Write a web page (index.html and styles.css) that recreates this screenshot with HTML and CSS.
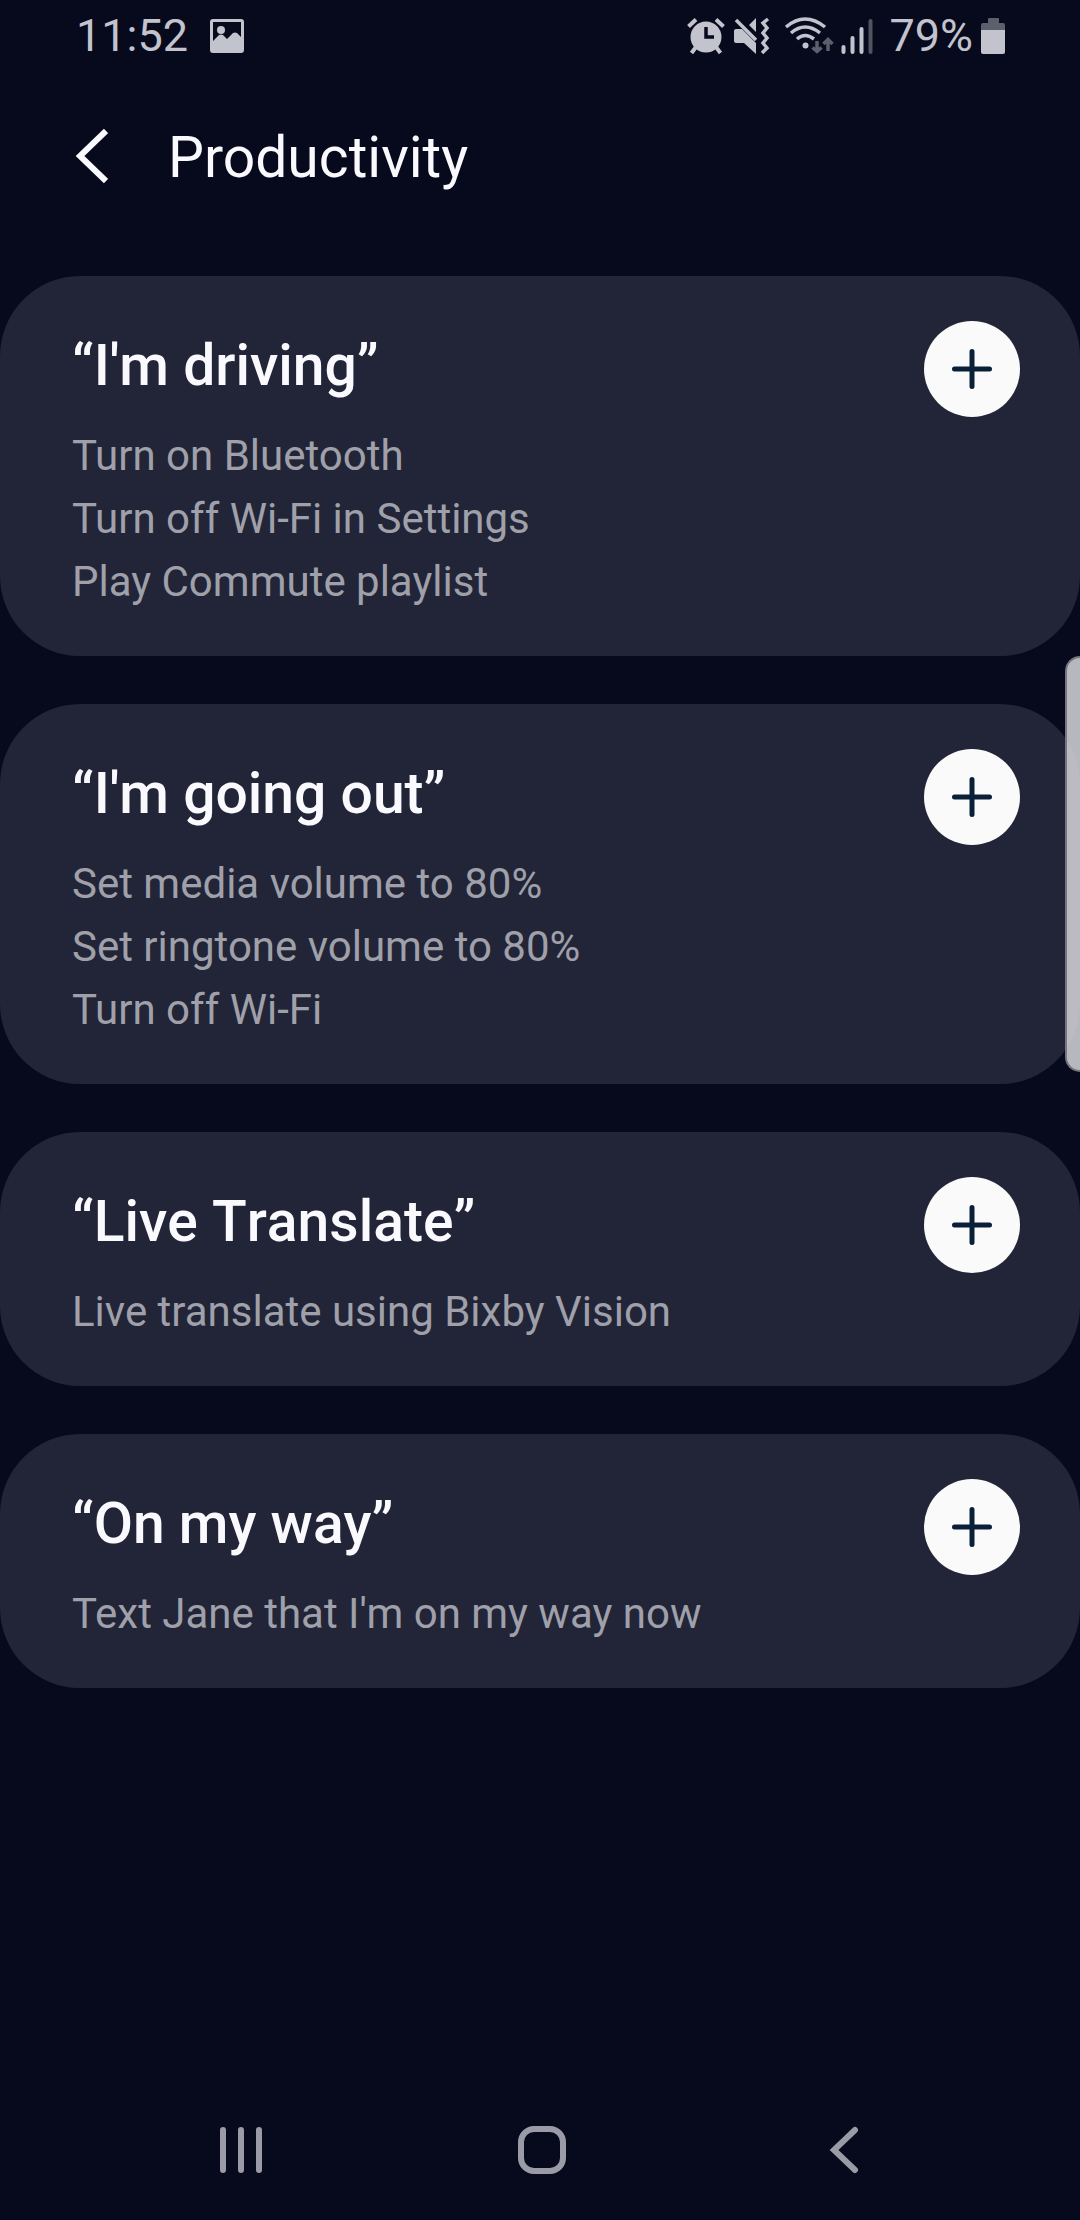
FILE: index.html
```html
<!DOCTYPE html>
<html lang="en">
<head>
<meta charset="utf-8">
<meta name="viewport" content="width=device-width, initial-scale=1">
<title>Productivity</title>
<link rel="stylesheet" href="styles.css">
</head>
<body>
<div class="screen">
  <div class="status">
    <div class="status-left">
      <span>11:52</span>
      <svg class="picture" width="36" height="36" viewBox="0 0 36 36" aria-hidden="true"><path fill="currentColor" fill-rule="evenodd" d="M4 1h28q3 0 3 3v28q0 3-3 3H4q-3 0-3-3V4q0-3 3-3zM4 4v19l6-6q2-1 4 0l4 4 6-6q2-1 4 0l4 4V4z"/><circle cx="12" cy="12" r="4" fill="currentColor"/></svg>
    </div>
    <div class="status-right">
      <svg width="38" height="38" viewBox="0 0 38 38" aria-hidden="true"><g fill="none" stroke="currentColor" stroke-width="4"><path d="M1.500 9.500 9 2.500M29 2.500l7.500 7M9 30l-4.500 6M29 30l4.500 6"/></g><circle cx="19" cy="20" r="15.500" fill="currentColor"/><path d="M19 10v10h8" fill="none" stroke="#070a1d" stroke-width="3.500"/></svg>
      <svg class="mute" width="38" height="38" viewBox="0 0 38 38" aria-hidden="true"><path fill="currentColor" d="M3 12h6l14 14v11L11 26H3q-2 0-2-2V14q0-2 2-2zM16 8l7-7v14z"/><path fill="none" stroke="currentColor" stroke-width="3.500" d="m3 3 20 20M35 2l-5 4 4 5-4 5 4 5-4 5 4 5-5 5"/></svg>
      <svg class="wifi" width="50" height="38" viewBox="0 0 50 38" aria-hidden="true"><g fill="none" stroke="currentColor" stroke-width="3.500"><path d="M2 10q19-16 39 0M7 16q14-12 29 0M13 22q8-7 17 0"/></g><circle cx="21.500" cy="28.500" r="3" fill="currentColor"/><path fill="none" stroke="#5d5f6d" stroke-width="3.500" d="M33 24v10M28.500 30.500l4.500 4 4.500-4M44 34V24M39.500 27l4.500-4.500 4.500 4.500"/></svg>
      <svg class="signal" width="32" height="36" viewBox="0 0 32 36" aria-hidden="true"><g stroke-width="4" stroke-linecap="round" stroke="currentColor"><path d="M2.500 29v5M11.500 20v14M20.500 11v23"/><path d="M29.500 3v31" stroke="#51535f"/></g></svg>
      <span>79%</span>
      <svg class="battery" width="24" height="36" viewBox="0 0 24 36" aria-hidden="true"><path fill="#5d5f6d" d="M8 0h9q1 0 1 1v4h4q2 0 2 2v6H0V7q0-2 2-2h5V1q0-1 1-1z"/><path fill="currentColor" d="M0 12h24v22q0 2-2 2H2q-2 0-2-2z"/></svg>
    </div>
  </div>

  <header class="header">
    <button class="back" aria-label="Navigate up"><svg width="36" height="56" viewBox="0 0 36 56" aria-hidden="true"><path d="M34 3 8 28l26 25" fill="none" stroke="currentColor" stroke-width="6"/></svg></button>
    <h1>Productivity</h1>
  </header>

  <main class="cards">
    <section class="card">
      <div class="card-text">
        <h2>“I'm driving”</h2>
        <p>Turn on Bluetooth</p>
        <p>Turn off Wi-Fi in Settings</p>
        <p>Play Commute playlist</p>
      </div>
      <button class="add" aria-label="Add I'm driving"><svg width="40" height="40" viewBox="0 0 40 40" aria-hidden="true"><path d="M20 2.500v35M2.500 20h35"/></svg></button>
    </section>
    <section class="card">
      <div class="card-text">
        <h2>“I'm going out”</h2>
        <p>Set media volume to 80%</p>
        <p>Set ringtone volume to 80%</p>
        <p>Turn off Wi-Fi</p>
      </div>
      <button class="add" aria-label="Add I'm going out"><svg width="40" height="40" viewBox="0 0 40 40" aria-hidden="true"><path d="M20 2.500v35M2.500 20h35"/></svg></button>
    </section>
    <section class="card">
      <div class="card-text">
        <h2>“Live Translate”</h2>
        <p>Live translate using Bixby Vision</p>
      </div>
      <button class="add" aria-label="Add Live Translate"><svg width="40" height="40" viewBox="0 0 40 40" aria-hidden="true"><path d="M20 2.500v35M2.500 20h35"/></svg></button>
    </section>
    <section class="card">
      <div class="card-text">
        <h2>“On my way”</h2>
        <p>Text Jane that I'm on my way now</p>
      </div>
      <button class="add" aria-label="Add On my way"><svg width="40" height="40" viewBox="0 0 40 40" aria-hidden="true"><path d="M20 2.500v35M2.500 20h35"/></svg></button>
    </section>
  </main>

  <nav class="nav">
    <button aria-label="Recent apps"><svg width="48" height="48" viewBox="0 0 48 48" aria-hidden="true"><path d="M6 4v40M24 4v40M42 4v40"/></svg></button>
    <button aria-label="Home"><svg width="48" height="48" viewBox="0 0 48 48" aria-hidden="true"><rect x="3" y="3" width="42" height="42" rx="13"/></svg></button>
    <button aria-label="Back"><svg width="48" height="48" viewBox="0 0 48 48" aria-hidden="true"><path d="M36 4 15 24l21 20"/></svg></button>
  </nav>
  <div class="edge-handle"></div>
</div>
</body>
</html>
```
FILE: styles.css
```css
* {
  box-sizing: border-box;
}

body {
  margin: 0;
  background: #070a1d;
  color: #fafafe;
  font-family: Roboto, "Liberation Sans", sans-serif;
}

h1,
h2,
p {
  margin: 0;
}

button {
  display: flex;
  align-items: center;
  justify-content: center;
  padding: 0;
  border: 0;
  background: none;
  color: inherit;
}

.screen {
  position: relative;
  display: flex;
  flex-direction: column;
  min-height: 100vh;
}

.status {
  display: flex;
  justify-content: space-between;
  height: 72px;
  padding: 0 75px 0 76px;
  color: #c2c3cc;
  font-size: 45px;
  line-height: 72px;
}

.status-left,
.status-right {
  display: flex;
  align-items: center;
}

.picture {
  margin-left: 21px;
}

.mute {
  margin-left: 8px;
}

.wifi {
  margin-left: 13px;
}

.signal {
  margin: 0 16px 0 7px;
}

.battery {
  margin-left: 8px;
}

.header {
  display: flex;
  align-items: center;
  gap: 60px;
  height: 168px;
  padding: 0 72px;
}

.header h1 {
  padding-top: 4px;
  font-size: 57px;
  font-weight: 400;
  line-height: 84px;
}

.cards {
  display: flex;
  flex-direction: column;
  gap: 48px;
  padding: 36px 0 48px;
}

.card {
  display: flex;
  align-items: flex-start;
  justify-content: space-between;
  padding: 45px 60px 43px 72px;
  border-radius: 80px;
  background: #222537;
}

.card-text {
  padding-top: 3px;
}

.card h2 {
  margin-bottom: 16px;
  font-size: 57px;
  font-weight: 500;
  font-kerning: none;
  line-height: 84px;
}

.card p {
  color: #9fa0aa;
  font-size: 42px;
  line-height: 63px;
}

.add {
  flex: none;
  width: 96px;
  height: 96px;
  border-radius: 50%;
  background: #fafafa;
}

.add svg {
  fill: none;
  stroke: #0a1f38;
  stroke-width: 5;
  stroke-linecap: round;
}

.nav {
  display: grid;
  grid-template-columns: repeat(3, 1fr);
  height: 140px;
  margin-top: auto;
  padding: 0 86px 0 90px;
  color: #9a9ba6;
}

.nav svg {
  fill: none;
  stroke: currentColor;
  stroke-width: 6;
  stroke-linecap: round;
}

.edge-handle {
  position: absolute;
  top: 656px;
  right: 0;
  width: 15px;
  height: 416px;
  border: 2px solid #77757f;
  border-right: 0;
  border-radius: 16px 0 0 16px;
  background: rgba(208, 208, 213, 0.88);
}
```
